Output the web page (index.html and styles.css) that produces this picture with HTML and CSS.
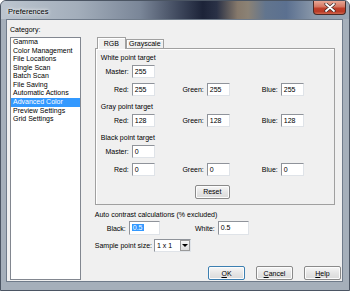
FILE: index.html
```html
<!DOCTYPE html>
<html lang="en">
<head>
  <meta charset="UTF-8" />
  <title>Preferences</title>
  <link rel="stylesheet" href="styles.css">
</head>
<body>
  <div class="window">
    <div class="titlebar">
      <span class="title">Preferences</span>
      <div class="close">
        <svg width="12" height="9" viewBox="0 0 12 9">
          <path d="M2 1 L10 8 M10 1 L2 8" stroke="#3a2a28" stroke-width="3.2" stroke-linecap="round"/>
          <path d="M2 1 L10 8 M10 1 L2 8" stroke="#ffffff" stroke-width="1.8" stroke-linecap="round"/>
        </svg>
      </div>
    </div>

    <div class="client">
      <div class="category">
        <div class="cat-label">Category:</div>
        <ul class="list">
          <li>Gamma</li>
          <li>Color Management</li>
          <li>File Locations</li>
          <li>Single Scan</li>
          <li>Batch Scan</li>
          <li>File Saving</li>
          <li>Automatic Actions</li>
          <li class="selected">Advanced Color</li>
          <li>Preview Settings</li>
          <li>Grid Settings</li>
        </ul>
      </div>

      <div class="main">
        <div class="tabs">
          <div class="tab active">RGB</div>
          <div class="tab">Grayscale</div>
        </div>

        <div class="panel">
          <div class="heading">White point target</div>
          <div class="row">
            <span class="lbl">Master:</span><span class="field">255</span>
          </div>
          <div class="row gap">
            <span class="lbl">Red:</span><span class="field">255</span>
            <span class="lbl">Green:</span><span class="field">255</span>
            <span class="lbl">Blue:</span><span class="field">255</span>
          </div>

          <div class="heading group">Gray point target</div>
          <div class="row">
            <span class="lbl">Red:</span><span class="field">128</span>
            <span class="lbl">Green:</span><span class="field">128</span>
            <span class="lbl">Blue:</span><span class="field">128</span>
          </div>

          <div class="heading group">Black point target</div>
          <div class="row">
            <span class="lbl">Master:</span><span class="field">0</span>
          </div>
          <div class="row gap">
            <span class="lbl">Red:</span><span class="field">0</span>
            <span class="lbl">Green:</span><span class="field">0</span>
            <span class="lbl">Blue:</span><span class="field">0</span>
          </div>

          <div class="reset-row">
            <button class="btn reset">Reset</button>
          </div>
        </div>

        <div class="auto-label">Auto contrast calculations (% excluded)</div>
        <div class="auto-row">
          <span class="lbl">Black:</span><span class="field wide"><span class="sel">0.5</span></span>
          <span class="lbl">White:</span><span class="field wide">0.5</span>
        </div>

        <div class="sample-row">
          <span>Sample point size:</span>
          <div class="select">
            <span class="select-text">1 x 1</span>
            <span class="drop"><span class="arrow"></span></span>
          </div>
        </div>

        <div class="buttons">
          <button class="btn default"><u>O</u>K</button>
          <button class="btn"><u>C</u>ancel</button>
          <button class="btn"><u>H</u>elp</button>
        </div>
      </div>
    </div>
  </div>
</body>
</html>
```

FILE: styles.css
```css
body {
  margin: 0;
  font-family: "Liberation Sans", Arial, sans-serif;
  font-size: 7px;
  color: #000;
  background: #fff;
}

.window {
  width: 350px;
  height: 291px;
  box-sizing: border-box;
  padding: 0 6px 8px 5px;
  display: flex;
  flex-direction: column;
  background: #a5afba;
  border: 1px solid #4b5563;
  border-radius: 6px 6px 0 0;
  overflow: hidden;
}

.titlebar {
  height: 18px;
  margin: 0 -6px 0 -5px;
  padding: 0 3px 0 7px;
  display: flex;
  align-items: flex-start;
  justify-content: space-between;
  background: linear-gradient(90deg, #bcc5cf 0%, #a3aebb 22%, #7a8698 40%, #3a4358 52%, #1c2338 58%, #2a3146 62%, #86796b 68%, #8b8275 71%, #62758e 76%, #5b7090 82%, #8a98a9 90%, #9aa6b3 100%);
}

.title {
  margin-top: 6px;
  font-size: 7.5px;
  text-shadow: 0 0 3px #fff, 0 0 5px #fff;
}

.close {
  width: 33px;
  height: 14px;
  box-sizing: border-box;
  display: flex;
  align-items: center;
  justify-content: center;
  border: 1px solid #4a2a25;
  border-top: none;
  border-radius: 0 0 4px 4px;
  background: linear-gradient(#e9a895 0%, #d47560 45%, #c0402a 55%, #b83a25 80%, #d0654c 100%);
}

.client {
  flex: 1;
  display: flex;
  background: #f0f0f0;
  border: 1px solid #6f7b8a;
  padding: 0 1px 1px 2px;
}

.category {
  width: 71px;
  padding: 4.5px 0 0 1px;
  display: flex;
  flex-direction: column;
}

.cat-label {
  line-height: 9px;
  margin-bottom: 3.5px;
}

.list {
  flex: 1;
  margin: 0;
  padding: 0;
  list-style: none;
  background: #fff;
  border: 1px solid #828790;
}

.list li {
  height: 8.57px;
  line-height: 8.57px;
  padding-left: 2px;
  white-space: nowrap;
}

.list li.selected {
  background: #3399ff;
  color: #fff;
}

.main {
  margin-left: 14px;
  width: 247px;
  padding-top: 17px;
  display: flex;
  flex-direction: column;
}

.tabs {
  height: 12px;
  margin-bottom: -1px;
  padding-left: 2px;
  display: flex;
  align-items: flex-end;
}

.tab {
  width: 38px;
  height: 10px;
  box-sizing: border-box;
  line-height: 8px;
  text-align: center;
  border: 1px solid #a0a0a0;
  border-bottom: none;
  box-shadow: inset 1px 1px 0 #fff;
  background: #f0f0f0;
}

.tab.active {
  width: 29px;
  height: 12px;
  line-height: 11px;
  position: relative;
  z-index: 1;
}

.panel {
  width: 240px;
  height: 157px;
  box-sizing: border-box;
  padding-top: 3.5px;
  border: 1px solid #a0a0a0;
  box-shadow: inset 1px 1px 0 #fff;
}

.heading {
  line-height: 9px;
  padding-left: 5px;
  margin-bottom: 3px;
}

.heading.group {
  margin-top: 6px;
}

.row {
  height: 13px;
  display: grid;
  grid-template-columns: 36px 23px 52px 23px 51px 23px;
  align-items: center;
}

.row.gap {
  margin-top: 5px;
}

.lbl {
  text-align: right;
  padding-right: 3px;
}

.field {
  height: 13px;
  box-sizing: border-box;
  padding-left: 2px;
  line-height: 11px;
  background: #fff;
  border: 1px solid;
  border-color: #8f939a #dfe3e8 #dfe3e8 #8f939a;
}

.field.wide {
  width: 31px;
  height: 14px;
  line-height: 12px;
}

.sel {
  background: #3399ff;
  color: #fff;
  padding: 0 1px;
}

.reset-row {
  margin-top: 9px;
  padding-left: 99px;
}

.btn {
  font-family: "Liberation Sans", Arial, sans-serif;
  font-size: 7px;
  color: #000;
  width: 37px;
  height: 14px;
  padding: 0;
  border: 1px solid #8a8a8a;
  border-radius: 2px;
  background: linear-gradient(#f7f7f7, #e6e6e6 50%, #dadada);
  box-shadow: inset 0 0 0 1px #fcfcfc;
}

.btn.reset {
  width: 35px;
}

.btn.default {
  border-color: #3c7fb1;
}

.auto-label {
  margin-top: 4.5px;
  line-height: 9px;
}

.auto-row {
  margin-top: 2.5px;
  height: 14px;
  display: grid;
  grid-template-columns: 34px 31px 58px 31px;
  align-items: center;
}

.sample-row {
  margin-top: 4px;
  height: 13px;
  display: flex;
  align-items: center;
  gap: 2px;
}

.select {
  width: 37px;
  height: 13px;
  box-sizing: border-box;
  display: flex;
  align-items: center;
  justify-content: space-between;
  background: #fff;
  border: 1px solid;
  border-color: #8f939a #dfe3e8 #dfe3e8 #8f939a;
}

.select-text {
  padding-left: 2px;
}

.drop {
  width: 10px;
  height: 11px;
  box-sizing: border-box;
  display: flex;
  align-items: center;
  justify-content: center;
  border: 1px solid #9a9a9a;
  background: linear-gradient(#f4f4f4, #dcdcdc);
}

.arrow {
  width: 0;
  height: 0;
  border-left: 3px solid transparent;
  border-right: 3px solid transparent;
  border-top: 3px solid #000;
}

.buttons {
  margin-top: 14px;
  display: flex;
  justify-content: flex-end;
  gap: 11px;
}
```
